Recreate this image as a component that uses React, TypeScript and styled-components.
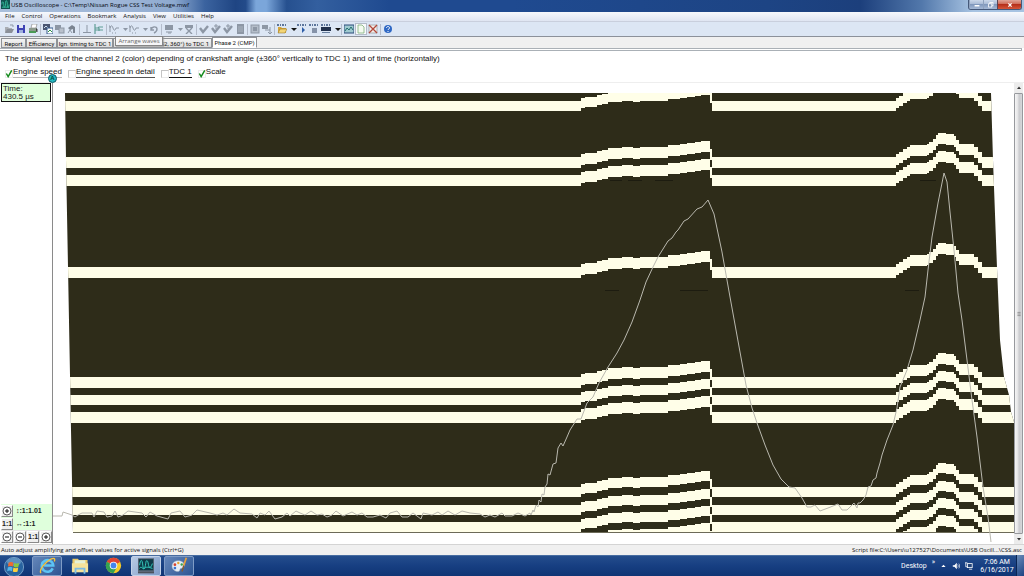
import React from 'react';
import styled, { createGlobalStyle } from 'styled-components';

const ui = `'Open Sans', 'Noto Sans', sans-serif`;
const narrow = `Roboto, 'Liberation Sans', sans-serif`;
const arial = `'Liberation Sans', Arial, sans-serif`;

const Global = createGlobalStyle`
  * { box-sizing: border-box; }
  body { margin: 0; background: #fff; font-family: ${ui}; font-size: 6px; color: #222; }
  button { font: inherit; color: inherit; padding: 0; border: 0; background: none; }
`;

const Page = styled.div`
  min-height: 100vh;
  display: flex;
  flex-direction: column;
`;

/* ---------- title, menu, tool bar ---------- */

const TitleBar = styled.header`
  display: flex;
  align-items: flex-start;
  height: 12px;
  padding-left: 1px;
  background: linear-gradient(90deg, #a9bfdb 0, #9db5d6 12%, #8da9cf 17%, #3b639f 20%, #1f4583 23%, #234b8a 24%, #7ba6da 25%, #7ba6da 26%, #26508f 28%, #335f9f 31%, #1f4a90 38%, #1f4a90 50%, #1d4484 75%, #1c3f7c 84%, #5278ab 90%, #a7c3e2 95%);
`;
const TitleText = styled.h1`
  margin: 0;
  padding-left: 1px;
  flex: 1;
  font-size: 6px;
  line-height: 11px;
  font-weight: 400;
  font-family: ${ui};
  white-space: nowrap;
  color: #05080f;
`;
const Caption = styled.div`
  display: flex;
  height: 10px;
  margin-right: 2px;
  border: 1px solid #45597a;
  border-top: 0;
  border-radius: 0 0 3px 3px;
  overflow: hidden;
`;
const CaptionButton = styled.button<{ $close?: boolean }>`
  display: grid;
  place-items: center;
  width: ${p => (p.$close ? 24 : 14)}px;
  background: ${p => (p.$close
    ? 'linear-gradient(#e0a598 0, #cf6a56 45%, #b52f1a 50%, #d4563a)'
    : 'linear-gradient(#cbd8ea 0, #a9bbd6 45%, #8199bd 50%, #a5b9d6)')};
  border-left: ${p => (p.$close ? '1px solid #5a4556' : '1px solid #8fa2be')};
`;
const MenuBar = styled.nav`
  display: flex;
  gap: 7px;
  height: 10px;
  padding-left: 5px;
  background: linear-gradient(#f6f8fc, #dfe5f2);
  border-bottom: 1px solid #c9cfdd;
`;
const MenuItem = styled.button`
  font-size: 6px;
  line-height: 9px;
  color: #111;
`;
const ToolBar = styled.div`
  display: flex;
  align-items: center;
  height: 15px;
  padding-left: 3px;
  background: #dce6f4;
  border-bottom: 1px solid #8c919a;
`;
const ToolButton = styled.button<{ $narrow?: boolean; $on?: boolean }>`
  display: grid;
  place-items: center;
  width: ${p => (p.$narrow ? 8 : 12)}px;
  height: 12px;
  background: ${p => (p.$on ? '#f8fafc' : 'none')};
  box-shadow: ${p => (p.$on ? 'inset 0 0 0 1px #b4bcc8' : 'none')};
`;
const ToolSeparator = styled.span`
  width: 1px;
  height: 11px;
  margin: 0 1px;
  background: #b4bccb;
`;

/* ---------- tabs ---------- */

const TabStrip = styled.div`
  position: relative;
  display: flex;
  align-items: flex-end;
  height: 11px;
  padding-left: 1px;
  background: #f0f0f0;
`;
const Tab = styled.button<{ $active?: boolean; $width: number }>`
  width: ${p => p.$width}px;
  height: ${p => (p.$active ? 11 : 10)}px;
  line-height: 9px;
  font-family: ${narrow};
  font-size: 6px;
  text-align: ${p => (p.$width > 80 ? 'right' : 'center')};
  padding-right: ${p => (p.$width > 80 ? 2 : 0)}px;
  white-space: nowrap;
  color: #111;
  background: ${p => (p.$active ? '#fff' : 'linear-gradient(#f4f4f4, #dcdcdc)')};
  border: 1px solid #8f9297;
  border-bottom-color: ${p => (p.$active ? '#fff' : '#8f9297')};
  & + & { border-left-width: ${p => (p.$active ? 1 : 0)}px; }
`;
const Tooltip = styled.div`
  position: absolute;
  left: 115px;
  top: -1px;
  width: 48px;
  height: 10px;
  line-height: 8px;
  text-align: center;
  color: #666;
  background: #f6f6f8;
  border: 1px solid #868686;
  box-shadow: 1px 1px 1px #9999;
`;
const TabEdge = styled.div`
  height: 3px;
  margin-right: 2px;
  background: #fff;
  border: 1px solid #aab0b6;
  border-left: 0;
`;

/* ---------- options ---------- */

const Options = styled.section`
  padding: 3px 5px 0;
  height: 32px;
  font-family: ${arial};
  font-size: 8px;
  line-height: 10px;
  color: #111;
  border-bottom: 1px solid #eee;
`;
const Description = styled.p`
  margin: 0 0 3px;
  white-space: nowrap;
`;
const CheckRow = styled.div`
  display: flex;
  gap: 6px;
`;
const Check = styled.label`
  display: grid;
  grid-template-columns: 8px auto;
  align-items: end;
  white-space: nowrap;
  input, svg { grid-area: 1 / 1; }
  input {
    appearance: none;
    margin: 0;
    width: 8px;
    height: 8px;
    background: #fff;
    border: 1px solid #e8e8e8;
    border-top-color: #c4c4c4;
    border-left-color: #c4c4c4;
  }
  input:checked { border-color: #ececec; }
  svg { visibility: hidden; pointer-events: none; }
  input:checked + svg { visibility: visible; }
`;
const CheckText = styled.span<{ $line: string }>`
  border-bottom: 1px solid ${p => p.$line};
`;

/* ---------- plot ---------- */

const Work = styled.main`
  position: relative;
  flex: 1;
  display: flex;
  min-height: 0;
`;
const Side = styled.aside`
  width: 53px;
  display: flex;
  flex-direction: column;
  justify-content: space-between;
  border-right: 1px solid #8a8a8a;
  font-family: ${arial};
`;
const TimeBox = styled.div`
  margin: 0 1px;
  height: 19px;
  padding: 1px;
  font-size: 8px;
  line-height: 8px;
  color: #222;
  background: #dfffdc;
  border: 1px solid #111;
`;
const ZoomPanel = styled.div`
  display: flex;
  flex-direction: column;
  padding: 0 0 1px 1px;
`;
const ZoomRow = styled.div<{ $green?: boolean }>`
  display: flex;
  align-items: center;
  gap: ${p => (p.$green ? 3 : 1)}px;
  height: 13px;
  font: bold 7px/13px ${arial};
  background: ${p => (p.$green ? '#dfffdc' : '#e4e4e4')};
`;
const ZoomButton = styled.button`
  display: grid;
  place-items: center;
  width: 12px;
  height: 12px;
  font: bold 7px/10px ${arial};
  background: #eee;
  border: 1px solid #fff;
  border-right-color: #8a8a8a;
  border-bottom-color: #8a8a8a;
`;
const Marker = styled.div`
  position: absolute;
  left: 48px;
  top: -9px;
  width: 9px;
  height: 9px;
  border-radius: 50%;
  background: #23b9c2;
  border: 1px solid #0d5a66;
  font: bold 6px/7px ${arial};
  text-align: center;
  color: #043;
`;
const PlotArea = styled.div`
  flex: 1;
  min-width: 0;
  display: flex;
  svg { flex: 1; width: 100%; height: auto; display: block; }
`;
const ScrollBar = styled.div`
  width: 9px;
  margin-right: 1px;
  display: flex;
  flex-direction: column;
  background: #ececec;
`;
const ScrollButton = styled.button`
  height: 10px;
  display: grid;
  place-items: center;
`;
const ScrollThumb = styled.div`
  flex: 1;
  display: grid;
  place-items: center;
  background: linear-gradient(90deg, #f5f5f5, #e2e2e4 45%, #c9cacd 55%, #d6d7da);
  border: 1px solid #97999d;
  border-radius: 1px;
`;

/* ---------- status and task bar ---------- */

const StatusBar = styled.footer`
  display: flex;
  justify-content: space-between;
  height: 11px;
  padding: 0 2px 0 1px;
  background: #f0f0f0;
  border-top: 1px solid #d4d4d4;
  font-size: 6px;
  line-height: 10px;
  color: #111;
  white-space: nowrap;
`;
const TaskBar = styled.footer`
  display: flex;
  align-items: center;
  height: 21px;
  color: #fff;
  background: linear-gradient(#5e80ae 0, #244d8c 6%, #173f82 50%, #0f3474 100%);
`;
const TaskButton = styled.button<{ $open?: boolean; $active?: boolean; $start?: boolean }>`
  display: grid;
  place-items: center;
  width: ${p => (p.$start ? 28 : 30)}px;
  height: 20px;
  margin-right: ${p => (p.$start ? 4 : 3)}px;
  border-radius: 2px;
  border: 1px solid ${p => (p.$active ? '#c3d2e8' : p.$open ? '#7f9cc6' : 'transparent')};
  background: ${p => (p.$active
    ? 'linear-gradient(135deg, #b9cbe4, #7d9bc8)'
    : p.$open ? 'linear-gradient(135deg, #6486b9, #2d5593)' : 'none')};
`;
const Tray = styled.div`
  margin-left: auto;
  display: flex;
  align-items: center;
  gap: 5px;
  font-family: ${narrow};
  font-size: 7px;
  line-height: 8px;
`;
const Chevron = styled.span`
  align-self: flex-start;
`;
const Clock = styled.div`
  width: 38px;
  text-align: center;
`;
const ShowDesktop = styled.button`
  width: 8px;
  height: 21px;
  background: linear-gradient(135deg, #6b8cba, #1c4382);
  border-left: 1px solid #0a2553;
`;

/* ---------- icons ---------- */

const G = '#8d97a5';
const wave = <path d="M0 2h1v6M1 4c1-3 2-3 3 0s2 3 3 0h3M3 9h1M6 9h1" stroke={G} fill="none" />;
const tick = (extra: React.ReactNode = null) => (
  <>{extra}<path d="M1 4l3 4 5-6" stroke={G} strokeWidth="2.4" fill="none" /></>
);
const dots = <path d="M0 1h2M3 1h1M5 1h2M8 1h1" stroke="#33507c" strokeWidth="1.4" />;

const glyphs: Record<string, React.ReactNode> = {
  open: <><path d="M1 9V3h3l1 1h3v1" fill="#a9adb3" /><path d="M1 9l2-4h7L8 9z" fill="#8b9098" /><path d="M6 1h3v2" stroke={G} fill="none" /></>,
  save: <><rect x="1" y="1" width="8" height="8" fill="#3d42b4" /><rect x="3" y="1" width="4" height="3" fill="#dfe4f5" /><rect x="3" y="6" width="4" height="3" fill="#9fb0dc" /></>,
  print: <><path d="M3 4l1-4h5L8 4z" fill="#fff" stroke="#777" strokeWidth=".6" /><path d="M1 4h8v4H1z" fill="#8d9a8d" /><path d="M1 7h7v2H1z" fill="#4a9a55" /><path d="M8 5h1v3" stroke="#444" /></>,
  copy: <><rect x="0" y="0" width="7" height="6" fill="#4a5672" /><path d="M1 4l2-2 2 2" stroke="#cde" fill="none" /><rect x="4" y="4" width="6" height="6" fill="#fff" stroke="#355b8c" /><path d="M5 8l2-2 2 2" stroke="#2d9147" fill="none" /></>,
  copyGray: <><rect x="0" y="1" width="6" height="5" fill={G} /><rect x="4" y="4" width="5" height="5" fill="#b9c1cd" stroke={G} /></>,
  find: <><path d="M1 4l4-3 3 2v6H6V5L3 6z" fill="#7b8491" /><path d="M1 9l2-3 2 3" stroke={G} fill="none" /></>,
  base: <path d="M5 1v7M1 8.500h8" stroke={G} fill="none" />,
  green: <path d="M1 0v10M1 4h3l1-1h4M1 6h8M5 4v3" stroke="#5f9d95" strokeWidth="1.2" fill="none" />,
  wave,
  caret: <path d="M3 4h5L5.500 7z" fill={G} />,
  caretDark: <path d="M3 4h6L6 7z" fill="#111" />,
  undo: <path d="M2 3v3h3M2 6c1-4 6-4 6-1 0 2-1 3-3 4" stroke={G} strokeWidth="1.4" fill="none" />,
  screen: <><rect x="1" y="1" width="8" height="5" fill={G} /><path d="M2 8h6M4 9h3" stroke={G} /></>,
  screenX: <><path d="M1 1h8v3H1z" fill={G} /><path d="M2 4l6 6M8 4L2 10" stroke={G} strokeWidth="1.4" /></>,
  tick: tick(),
  tickUp: tick(<path d="M5 0v5M3 2h4" stroke={G} />),
  page: <><rect x="2" y="0" width="7" height="10" fill={G} /><path d="M3 3h5M3 5h5M3 7h5" stroke="#b9c1cd" strokeWidth=".7" /></>,
  frame: <><rect x="1" y="1" width="8" height="8" fill="#b4bdc9" stroke={G} /><rect x="3" y="3" width="4" height="4" fill={G} /></>,
  link: <><rect x="0" y="1" width="6" height="4" fill={G} /><path d="M3 6h5V3M8 6v3M6 8l2 2 2-2" stroke={G} fill="none" /></>,
  script: <>{dots}<path d="M1 9V3h3l1 1h4v5z" fill="#d7a63a" /><path d="M1 9l2-4h7L8 9z" fill="#f3d576" stroke="#8a6a20" strokeWidth=".5" /></>,
  run: <>{dots}<path d="M5 3v6l3-3z" fill="#2f5ea8" /></>,
  stop: <>{dots}<rect x="3" y="4" width="5" height="5" fill="#8592a8" /></>,
  panel: <>{dots}<rect x="0" y="3" width="10" height="4" fill="#22314d" /><path d="M1 8.500h8" stroke="#69809f" /></>,
  image: <><rect x="0" y="1" width="10" height="8" fill="#9fc9d0" stroke="#2d4d7a" /><path d="M1 7l2-3 2 2 2-3 2 3" stroke="#23706e" fill="none" /></>,
  note: <><path d="M2 1h4l2 2v6H2z" fill="#f4faf0" stroke="#7fae78" strokeWidth=".8" /></>,
  cross: <><rect x="1" y="1" width="8" height="8" fill="#f2efed" stroke="#999" strokeWidth=".7" /><path d="M1 1l8 8M9 1L1 9" stroke="#b24a3c" strokeWidth="1.300" /></>,
  help: <><circle cx="5" cy="5" r="4" fill="#2f68c4" /><path d="M3.500 4c0-2 3-2 3 0 0 1-1.500 1-1.500 2M5 7v1" stroke="#fff" fill="none" /></>,
  plus: <><circle cx="5" cy="5" r="4" fill="#fff" stroke="#333" strokeWidth=".8" /><path d="M3 5h4M5 3v4" stroke="#111" /></>,
  minus: <><circle cx="5" cy="5" r="4" fill="#fff" stroke="#333" strokeWidth=".8" /><path d="M3 5h4" stroke="#111" /></>,
  check: <path d="M1.500 5l2 3.500 4-7" stroke="#148a1c" strokeWidth="1.600" fill="none" />,
  up: <path d="M3 6h4L5 3.500z" fill="#333" />,
  down: <path d="M3 4h4L5 6.500z" fill="#333" />,
  upWhite: <path d="M2 7h6L5 4z" fill="#fff" />,
  grip: <path d="M3 3h4M3 5h4M3 7h4" stroke="#777" strokeWidth=".8" />,
  min: <path d="M2 6h6" stroke="#fff" strokeWidth="2" />,
  restore: <><rect x="3.500" y="2" width="4" height="4" fill="none" stroke="#fff" /><rect x="2" y="3.500" width="4" height="4" fill="#8095b6" stroke="#fff" /></>,
  close: <path d="M3 3l4 4M7 3L3 7" stroke="#fff" strokeWidth="1.600" />,
  app: <><rect x="0" y="0" width="10" height="10" fill="#11504f" /><path d="M1 5c0-4 2-4 2 0s2 4 2-1 2-4 2 1 2 3 2 0M1 8h8" stroke="#35c3a0" fill="none" /></>,
  sound: <><path d="M1 4h2l3-3v8L3 6H1z" fill="#fff" /><path d="M7 3c1 1 1 3 0 4M8.500 2c1.500 2 1.500 4 0 6" stroke="#fff" strokeWidth=".8" fill="none" /></>,
  network: <><rect x="3" y="2" width="6" height="5" fill="#23457c" stroke="#fff" /><path d="M5 9h4M1 1v5h2M0 1h3" stroke="#fff" fill="none" /></>,
  start: <><circle cx="5" cy="5" r="4.800" fill="#28639f" stroke="#88b0d4" strokeWidth=".4" /><ellipse cx="5" cy="2.500" rx="3.500" ry="2" fill="#82b1d5" opacity=".6" /><path d="M2.300 2.900q1.200-.7 2.400 0l-.3 1.900q-1.100-.6-2.400 0z" fill="#ee6a32" /><path d="M5.100 3q1.200.6 2.500 0l-.4 1.900q-1.200.6-2.400 0z" fill="#8bc83f" /><path d="M1.900 5.200q1.200-.6 2.400 0L4 7.100q-1.100-.6-2.400 0z" fill="#54b4ea" /><path d="M4.700 5.300q1.200.6 2.400 0l-.3 1.900q-1.200.6-2.400 0z" fill="#fbd03e" /></>,
  ie: <><path d="M8.100 6.700A3.400 3.400 0 1 1 8.400 5H3" stroke="#5cc4f5" strokeWidth="1.500" fill="none" /><path d="M1.200 9.400C-.3 8 3.500 2.800 7 1.200c2-.9 2.600-.2 2 1.400" stroke="#f3c23c" strokeWidth=".8" fill="none" /></>,
  folder: <><path d="M.8 1h3l.6.7h4.800V8H.8z" fill="#e8c765" /><path d="M2 1.800h6v3H2z" fill="#e5f1d8" /><path d="M.5 3.500h9V8.500h-9z" fill="#f5e29a" /><path d="M2.500 9.300V6.500h5v2.800" stroke="#7cbce4" strokeWidth="1" fill="none" /></>,
  chrome: <><circle cx="5" cy="5" r="4.500" fill="#f6c927" /><path d="M5 5L1.100 2.750A4.500 4.500 0 0 1 8.900 2.750z" fill="#e04434" /><path d="M8.900 2.750H5V5z" fill="#e04434" /><path d="M5 5L1.100 2.750A4.500 4.500 0 0 0 5 9.500L7 6z" fill="#35a252" /><circle cx="5" cy="5" r="2.200" fill="#fff" /><circle cx="5" cy="5" r="1.700" fill="#4484ee" /></>,
  scope: <><rect x=".2" y=".5" width="9.600" height="7.500" fill="#0e3a48" stroke="#5b6470" strokeWidth=".5" /><path d="M1 4.500c.6-4 1.600-4 2 0s1.500 2 1.800-1 1.400-2 1.700.5 1.500 2.500 2.500-.5M1 6.500c1-2 2 1 3 0s2-1 5 0" stroke="#36cfc0" strokeWidth=".6" fill="none" /><path d="M0 8.300h10v1.300H0z" fill="#4b525c" /></>,
  paint: <><path d="M.6 5.500C.6 2.500 3.500 1.800 5.500 2.300c2.500.6 3 3 1.500 4-1 .6-1.800.3-1.800 1.300C5 9.500.6 8.500.6 5.500z" fill="#e6eef6" stroke="#9ab" strokeWidth=".3" /><circle cx="2.300" cy="4.500" r=".8" fill="#d8432e" /><circle cx="4.300" cy="3.500" r=".7" fill="#e9a72e" /><circle cx="2.300" cy="6.500" r=".8" fill="#3b74cf" /><circle cx="6.300" cy="4.400" r=".7" fill="#38a050" /><path d="M9 .5L7.500 5" stroke="#e7a03a" strokeWidth="1" /><path d="M7.500 5L6.500 8.500" stroke="#8a5a2c" strokeWidth=".8" /></>,
};

function Icon({ name, size = 10 }: { name: string; size?: number }) {
  return <svg width={size} height={size} viewBox="0 0 10 10" aria-hidden="true">{glyphs[name]}</svg>;
}

const tools = [
  'open', 'save', 'print', '|', 'copy', 'copyGray', 'find', '|', 'base', 'green', '|',
  'wave', 'caret', 'wave', 'caret', 'undo', '|', 'screen', 'caret', 'screenX', '|',
  'tick', 'tickUp', 'tickUp', 'page', '|', 'frame', 'link', '|', 'script', 'caretDark', 'run', 'stop',
  'panel', 'caretDark', '|', 'image', 'note', 'cross', '|', 'help',
];

/* ---------- chart ---------- */

// Start of each step and its shift from the resting level of a band.
const steps: [number, number][] = [
  [60, 0], [581, -3], [585, -4], [597, -6], [602, -7], [608, -9], [622, -10], [633, -9], [640, -10],
  [668, -12], [680, -13], [687, -14], [695, -15], [701, -16], [710, -8], [712, 0],
  [896, -3], [899, -5], [903, -8], [907, -10], [910, -12], [927, -13], [929, -15], [933, -18],
  [936, -22], [938, -24], [946, -23], [954, -21], [956, -17], [959, -13], [974, -10], [978, -5], [982, 0],
];
const bands: [number, number][] = [
  [101, 111], [157, 168], [175, 186], [267, 278], [377, 388],
  [395, 405], [412, 423], [487, 497], [505, 515], [522, 532], [539, 550],
];

function bandPath([top, bottom]: [number, number]) {
  const upper: string[] = [];
  const lower: string[] = [];
  steps.forEach(([x, shift], i) => {
    const end = i + 1 < steps.length ? steps[i + 1][0] : 1016;
    upper.push(`${x},${top + shift} ${end},${top + shift}`);
    lower.unshift(`${end},${bottom + shift} ${x},${bottom + shift}`);
  });
  return upper.concat(lower).join(' ');
}

const trace =
  '53,516 62,516 63,512 72,515 75,517 78,515 82,513 92,513 94,517 97,511 104,512 107,517 112,516 115,511 118,517 123,515 128,511 142,513 146,517 150,512 157,516 168,519 171,513 180,511 185,517 192,515 197,510 210,513 217,515 223,513 227,515 234,509 240,513 252,514 257,518 260,513 265,515 269,511 275,519 282,517 287,513 290,516 296,511 300,513 305,515 311,511 317,515 322,514 327,517 332,515 336,511 343,516 352,512 357,515 362,513 367,517 373,517 380,515 386,518 390,513 397,511 402,517 408,517 413,513 421,519 423,513 432,515 438,512 442,515 448,511 455,515 462,511 470,513 480,514 485,517 490,515 495,517 502,513 505,516 512,516 518,513 525,516 530,513 531,515 533,510 534,512 536,505 538,507 539,500 541,502 542,494 544,495 545,487 547,484 548,474 550,475 553,464 556,463 558,448 561,443 563,446 567,437 570,430 577,419 581,419 587,403 593,397 599,383 608,367 617,353 624,340 632,322 640,300 646,282 653,267 658,257 668,241 672,238 676,232 678,230 684,221 688,219 697,209 702,207 708,200 714,214 722,252 730,297 738,341 746,385 752,408 757,423 765,445 773,465 781,479 789,487 795,488 802,498 807,507 811,507 815,505 820,511 828,508 838,504 842,510 847,510 854,503 857,508 858,503 860,503 863,500 866,495 868,487 871,486 873,480 876,478 877,473 880,463 882,455 887,440 893,425 897,408 900,387 907,370 913,350 920,320 925,297 928,270 932,237 938,203 944,173 947,182 950,212 954,250 958,293 962,320 967,360 972,400 977,437 983,487 988,517 991,542';

function Plot() {
  return (
    <svg viewBox="53 83 961 461" preserveAspectRatio="none" role="img" aria-label="Signal level by crankshaft angle and time">
      <clipPath id="sweep">
        <path d="M65 93H991L993 160L997 268L1000 340L1004 377L1009 395L1011 412L1014 422V533H73L71 430L68 267L66 160Z" />
      </clipPath>
      <g clipPath="url(#sweep)">
        <rect x="53" y="93" width="961" height="440" fill="#2e2c19" />
        <g fill="#fffee8" shapeRendering="crispEdges">
          {bands.map(b => <polygon key={b[0]} points={bandPath(b)} />)}
        </g>
        <path d="M610 180.500h12M628 180.500h14M655 180.500h18M605 290.500h14M680 290.500h28M920 180.500h16M905 290.500h14" stroke="#1d1c10" fill="none" />
      </g>
      <path d="M73 532.500H1014" stroke="#6c6a58" />
      <polyline points={trace} fill="none" stroke="#b9b8ae" strokeWidth="1" strokeLinejoin="round" />
    </svg>
  );
}

const menus = ['File', 'Control', 'Operations', 'Bookmark', 'Analysis', 'View', 'Utilities', 'Help'];
const checks = [
  { text: 'Engine speed', on: true, line: '#b5b5b5' },
  { text: 'Engine speed in detail', on: false, line: '#555' },
  { text: 'TDC 1', on: false, line: '#111' },
  { text: 'Scale', on: true, line: 'transparent' },
];

export default function App() {
  return (
    <Page>
      <Global />
      <TitleBar>
        <Icon name="app" size={9} />
        <TitleText>USB Oscilloscope - C:\Temp\Nissan Rogue CSS Test Voltage.mwf</TitleText>
        <Caption>
          <CaptionButton aria-label="Minimize"><Icon name="min" size={8} /></CaptionButton>
          <CaptionButton aria-label="Restore"><Icon name="restore" size={8} /></CaptionButton>
          <CaptionButton $close aria-label="Close"><Icon name="close" size={8} /></CaptionButton>
        </Caption>
      </TitleBar>
      <MenuBar>{menus.map(m => <MenuItem key={m}>{m}</MenuItem>)}</MenuBar>
      <ToolBar>
        {tools.map((t, i) => t === '|'
          ? <ToolSeparator key={i} />
          : <ToolButton key={i} $narrow={t.startsWith('caret')} $on={t === 'note'} aria-label={t}><Icon name={t} /></ToolButton>)}
      </ToolBar>
      <TabStrip>
        <Tab $width={25}>Report</Tab>
        <Tab $width={31}>Efficiency</Tab>
        <Tab $width={56}>Ign. timing to TDC 1</Tab>
        <Tab $width={99}>52, 360°) to TDC 1</Tab>
        <Tab $width={45} $active>Phase 2 (CMP)</Tab>
        <Tooltip role="tooltip">Arrange waves</Tooltip>
      </TabStrip>
      <TabEdge />
      <Options>
        <Description>The signal level of the channel 2 (color) depending of crankshaft angle (±360° vertically to TDC 1) and of time (horizontally)</Description>
        <CheckRow>
          {checks.map(c => (
            <Check key={c.text}>
              <input type="checkbox" defaultChecked={c.on} />
              <Icon name="check" size={9} />
              <CheckText $line={c.line}>{c.text}</CheckText>
            </Check>
          ))}
        </CheckRow>
      </Options>
      <Work>
        <Side>
          <TimeBox>Time:<br />430.5 µs</TimeBox>
          <ZoomPanel>
            <ZoomRow $green><ZoomButton aria-label="Zoom in vertically"><Icon name="plus" /></ZoomButton>↕:1:1.01</ZoomRow>
            <ZoomRow $green><ZoomButton>1:1</ZoomButton>↔:1:1</ZoomRow>
            <ZoomRow>
              <ZoomButton aria-label="Zoom out"><Icon name="minus" /></ZoomButton>
              <ZoomButton aria-label="Zoom out horizontally"><Icon name="minus" /></ZoomButton>
              <ZoomButton>1:1</ZoomButton>
              <ZoomButton aria-label="Zoom in"><Icon name="plus" /></ZoomButton>
            </ZoomRow>
          </ZoomPanel>
        </Side>
        <Marker>A</Marker>
        <PlotArea><Plot /></PlotArea>
        <ScrollBar>
          <ScrollButton aria-label="Scroll up"><Icon name="up" /></ScrollButton>
          <ScrollThumb><Icon name="grip" size={8} /></ScrollThumb>
          <ScrollButton aria-label="Scroll down"><Icon name="down" /></ScrollButton>
        </ScrollBar>
      </Work>
      <StatusBar>
        <span>Auto adjust amplifying and offset values for active signals (Ctrl+G)</span>
        <span>Script file:C:\Users\u127527\Documents\USB Oscill...\CSS.asc</span>
      </StatusBar>
      <TaskBar>
        <TaskButton $start aria-label="Start"><Icon name="start" size={20} /></TaskButton>
        <TaskButton $open aria-label="Internet Explorer"><Icon name="ie" size={17} /></TaskButton>
        <TaskButton aria-label="Explorer"><Icon name="folder" size={18} /></TaskButton>
        <TaskButton aria-label="Chrome"><Icon name="chrome" size={17} /></TaskButton>
        <TaskButton $active aria-label="USB Oscilloscope"><Icon name="scope" size={16} /></TaskButton>
        <TaskButton $open aria-label="Paint"><Icon name="paint" size={17} /></TaskButton>
        <Tray>
          <span>Desktop</span>
          <Chevron>»</Chevron>
          <Icon name="upWhite" size={7} />
          <Icon name="sound" size={8} />
          <Icon name="network" size={8} />
          <Clock>7:06 AM<br />6/16/2017</Clock>
        </Tray>
        <ShowDesktop aria-label="Show desktop" />
      </TaskBar>
    </Page>
  );
}
